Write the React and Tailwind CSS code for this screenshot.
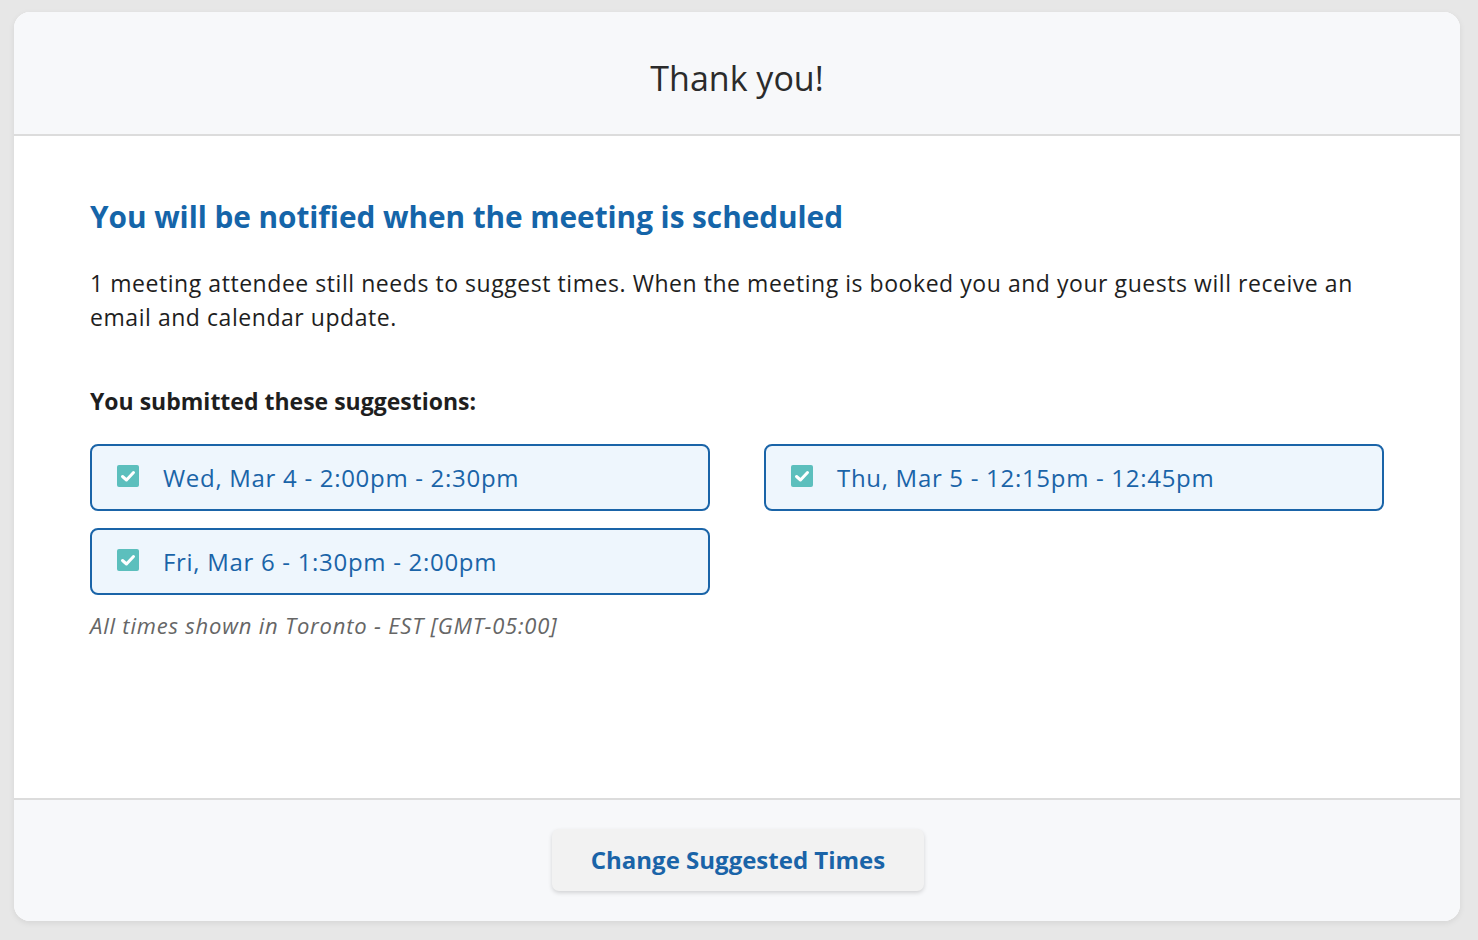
import React from 'react';

const suggestions = [
    'Wed, Mar 4 - 2:00pm - 2:30pm',
    'Thu, Mar 5 - 12:15pm - 12:45pm',
    'Fri, Mar 6 - 1:30pm - 2:00pm',
];

const CheckBox = () => (
    <svg width="22" height="22" viewBox="0 0 22 22" className="shrink-0">
        <rect x="0" y="0" width="22" height="22" rx="2" fill="#5cbfbd" />
        <path d="M5.5 11.5 L9.5 15 L16.5 7.5" fill="none" stroke="#fff" strokeWidth="3" strokeLinecap="round" strokeLinejoin="round" />
    </svg>
);

const App = () => {
    return (
        <div className="min-h-screen bg-[#e7e7e7] pt-[12px] pl-[14px] pr-[18px] pb-[18px] font-['Open_Sans',sans-serif]">
            <div className="bg-white rounded-[16px] overflow-hidden shadow-[0_2px_6px_rgba(0,0,0,0.08)] flex flex-col h-[909px]">
                {/* Header */}
                <div className="h-[124px] bg-[#f7f8fa] border-b-2 border-[#dcdcdc] flex items-center justify-center">
                    <h1 className="text-[34px] text-[#2b2b2b] pt-[10px]">Thank you!</h1>
                </div>

                {/* Body */}
                <div className="flex-1 px-[76px] pt-[61px]">
                    <h2 className="text-[29.8px] tracking-[-0.05px] font-bold text-[#1565a9] leading-[40px]">
                        You will be notified when the meeting is scheduled
                    </h2>
                    <p className="mt-[29px] text-[23px] tracking-[0.55px] leading-[34px] text-[#1e1e1e]">
                        1 meeting attendee still needs to suggest times. When the meeting is booked you and your guests will receive an email and calendar update.
                    </p>
                    <h3 className="mt-[50px] text-[23px] font-bold text-[#1e1e1e] leading-[34px]">
                        You submitted these suggestions:
                    </h3>
                    <div className="mt-[26px] grid grid-cols-2 gap-x-[54px] gap-y-[17px]">
                        {suggestions.map((s) => (
                            <div
                                key={s}
                                className="h-[67px] rounded-[8px] border-2 border-[#1a64a8] bg-[#eef6fd] flex items-center pl-[25px] gap-[24px]"
                            >
                                <div className="-mt-[4px]"><CheckBox /></div>
                                <span className="text-[24px] tracking-[0.7px] text-[#1a64a8]">{s}</span>
                            </div>
                        ))}
                    </div>
                    <p className="mt-[14px] text-[22px] tracking-[0.8px] italic text-[#666]">
                        All times shown in Toronto - EST [GMT-05:00]
                    </p>
                </div>

                {/* Footer */}
                <div className="h-[123px] bg-[#f7f8fa] border-t-2 border-[#dcdcdc] flex items-center justify-center">
                    <button className="w-[372px] h-[62px] -mt-[2px] ml-[2px] rounded-[7px] bg-[#f2f2f2] shadow-[0_2px_4px_rgba(0,0,0,0.15)] text-[24px] font-bold text-[#1a64a8]">
                        Change Suggested Times
                    </button>
                </div>
            </div>
        </div>
    );
};

export default App;
